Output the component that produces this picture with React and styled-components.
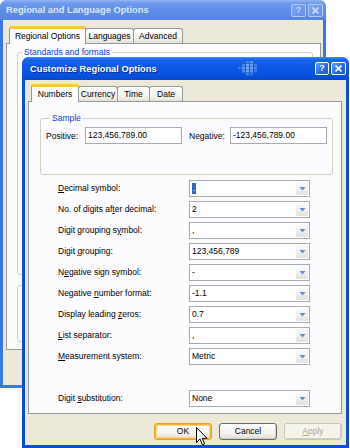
import React from 'react'
import styled, { createGlobalStyle } from 'styled-components'

const GlobalStyle = createGlobalStyle`
  html, body { margin: 0; padding: 0; background: #fff; }
  body {
    font-family: "Liberation Sans", Arial, sans-serif;
    font-size: 8.5px;
    color: #000;
  }
`

const Desktop = styled.div`
  position: relative;
  width: 350px;
  height: 448px;
  overflow: hidden;
  background: #fff;
`

const Window = styled.div`
  position: absolute;
  left: ${p => p.$left}px;
  top: ${p => p.$top}px;
  width: ${p => p.$width}px;
  height: ${p => p.$height}px;
  box-sizing: border-box;
  display: flex;
  flex-direction: column;
  border-radius: 7px 7px 0 0;
  overflow: hidden;
  background: ${p => p.$active ? '#0a4fdc' : '#3a76e4'};
`

const TitleBar = styled.div`
  position: relative;
  flex: none;
  height: ${p => p.$h}px;
  display: flex;
  align-items: center;
  padding: 0 3px 0 ${p => p.$pad}px;
  background: ${p => p.$active
    ? 'linear-gradient(#3d8cfb 0%, #1663ea 12%, #0b56e4 50%, #0650dc 85%, #0a48c4 100%)'
    : 'linear-gradient(#94b6f2 0%, #6f9bec 15%, #5d8ce8 55%, #5685e4 100%)'};
`

const Title = styled.div`
  flex: 1;
  font-weight: bold;
  font-size: 9.3px;
  color: ${p => p.$active ? '#fff' : '#dbe6fa'};
  text-shadow: ${p => p.$active ? '1px 1px 0 #0a2a9a' : 'none'};
  white-space: nowrap;
`

const CaptionButtons = styled.div`
  display: flex;
  gap: 2px;
`

const CaptionButton = styled.div`
  box-sizing: border-box;
  width: ${p => p.$w}px;
  height: 13px;
  display: flex;
  align-items: center;
  justify-content: center;
  border: 1px solid ${p => p.$active ? '#fff' : 'rgba(255,255,255,0.45)'};
  border-radius: 2px;
  background: ${p => p.$active
    ? 'linear-gradient(135deg, #5d9bff, #2566ea 60%, #1c55d8)'
    : 'linear-gradient(135deg, #7fa5ee, #6690e6)'};
  color: ${p => p.$active ? '#fff' : 'rgba(255,255,255,0.6)'};
  font-weight: bold;
  font-size: 9px;
  line-height: 1;
`

const PixelLogo = styled.svg`
  position: absolute;
  left: 215px;
  top: 4px;
`

const Body = styled.div`
  flex: 1;
  display: flex;
  flex-direction: column;
  margin: 0 3px 3px;
  padding: ${p => p.$pad};
  background: #ece9d8;
`

const TabRow = styled.div`
  flex: none;
  height: 17px;
  display: flex;
  align-items: flex-start;
  padding-left: 3px;
`

const Tab = styled.div`
  box-sizing: border-box;
  width: ${p => p.$w}px;
  height: ${p => p.$active ? 18 : 15}px;
  margin-top: ${p => p.$active ? 0 : 2}px;
  margin-left: ${p => p.$active ? 0 : -1}px;
  display: flex;
  align-items: center;
  justify-content: center;
  border: 1px solid #919b9c;
  border-bottom: none;
  border-radius: 3px 3px 0 0;
  background: ${p => p.$active ? '#fcfcfe' : 'linear-gradient(#ffffff, #f4f3ee 60%, #e4e2d9)'};
  position: relative;
  z-index: ${p => p.$active ? 2 : 0};
  ${p => p.$active && `
    border-top: 3px solid #ffc83c;
    box-shadow: inset 0 -1px 0 #fcfcfe;
    padding-bottom: 1px;
  `}
`

const Panel = styled.div`
  flex: 1;
  box-sizing: border-box;
  border: 1px solid #919b9c;
  background: #fcfcfe;
  display: flex;
  flex-direction: column;
`

const Group = styled.fieldset`
  flex: none;
  box-sizing: border-box;
  height: ${p => p.$h}px;
  margin: ${p => p.$margin};
  padding: ${p => p.$pad || '0'};
  border: 1px solid #d0d0bf;
  border-radius: 3px;
  min-width: 0;
`

const Legend = styled.legend`
  margin-left: 4px;
  padding: 0 2px;
  line-height: 10px;
  color: #0046d5;
`

const SampleRow = styled.div`
  display: grid;
  grid-template-columns: 39px 97px 48px 97px;
  align-items: center;
`

const SampleLabel = styled.div`
  padding-left: ${p => p.$indent || 0}px;
  white-space: nowrap;
`

const TextBox = styled.div`
  box-sizing: border-box;
  height: 17px;
  line-height: 15px;
  padding-left: 2px;
  border: 1px solid #a5acb2;
  background: #fff;
  white-space: nowrap;
`

const Rows = styled.div`
  display: grid;
  grid-template-columns: 131px 121px;
  grid-auto-rows: 17px;
  row-gap: 4px;
  margin: 5px 0 0 29px;
`

const RowLabel = styled.div`
  line-height: 17px;
  white-space: nowrap;
`

const Spacer = styled.div`
  grid-column: 1 / span 2;
`

const Combo = styled.div`
  box-sizing: border-box;
  display: flex;
  align-items: stretch;
  border: 1px solid #a5acb2;
  background: #fff;
`

const ComboValue = styled.div`
  flex: 1;
  line-height: 15px;
  padding-left: 2px;
  white-space: nowrap;
`

const Selected = styled.span`
  display: inline-block;
  height: 11px;
  line-height: 10px;
  padding: 0 1px;
  vertical-align: middle;
  background: #316ac5;
  color: #fff;
`

const ComboButton = styled.div`
  width: 12px;
  display: flex;
  align-items: center;
  justify-content: center;
  margin: 1px;
  border-radius: 1px;
  background: linear-gradient(#fbfbfb, #eeeeea 60%, #e2e2dc);
`

const U = styled.span`
  text-decoration: underline;
`

const ButtonRow = styled.div`
  flex: none;
  display: flex;
  justify-content: flex-end;
  gap: 7px;
  margin-top: 9px;
`

const Button = styled.div`
  box-sizing: border-box;
  width: 58px;
  height: 17px;
  line-height: 15px;
  text-align: center;
  border: 1px solid ${p => p.$disabled ? '#c9c7ba' : '#6b6b6b'};
  border-radius: 3px;
  background: ${p => p.$disabled ? '#f5f4ea' : 'linear-gradient(#ffffff, #f5f4ef 60%, #dedbd0)'};
  color: ${p => p.$disabled ? '#aca899' : '#000'};
  box-shadow: ${p => p.$focused ? 'inset 0 0 0 1px #f8b330, inset 0 0 0 2px #ffd98a' : 'inset -1px -1px 0 #cfcdc2'};
  ${p => p.$focused && 'border-color: #e8a026;'}
`

const Cursor = styled.svg`
  position: absolute;
  left: 196px;
  top: 427px;
`

const Arrow = () => (
  <svg width="7" height="4" viewBox="0 0 7 4">
    <path d="M0.5 0h6L3.5 3.5z" fill="#6b8bdc" />
  </svg>
)

const CloseGlyph = ({ color }) => (
  <svg width="7" height="7" viewBox="0 0 7 7">
    <path d="M0.5 0.5l6 6M6.5 0.5l-6 6" stroke={color} strokeWidth="1.6" />
  </svg>
)

const rows = [
  [<><U>D</U>ecimal symbol:</>, <Selected>.</Selected>],
  [<>No. of digits af<U>t</U>er decimal:</>, '2'],
  [<>Digit grouping s<U>y</U>mbol:</>, ','],
  [<>Digit <U>g</U>rouping:</>, '123,456,789'],
  [<>N<U>e</U>gative sign symbol:</>, '-'],
  [<>Negative <U>n</U>umber format:</>, '-1.1'],
  [<>Display leading <U>z</U>eros:</>, '0.7'],
  [<><U>L</U>ist separator:</>, ','],
  [<><U>M</U>easurement system:</>, 'Metric'],
  null,
  [<>Digit <U>s</U>ubstitution:</>, 'None'],
]

const pixels = [
  [9, 0, 0.35], [13, 0, 0.5], [5, 3, 0.4], [9, 3, 0.7], [13, 3, 0.6], [17, 3, 0.3],
  [1, 6, 0.3], [5, 6, 0.6], [9, 6, 0.8], [13, 6, 0.7], [17, 6, 0.45],
  [5, 9, 0.5], [9, 9, 0.7], [13, 9, 0.6], [17, 9, 0.3], [9, 12, 0.4], [13, 12, 0.3],
]

export default function App() {
  return (
    <>
      <GlobalStyle />
      <Desktop>
        <Window $left={0} $top={0} $width={326} $height={388}>
          <TitleBar $h={20} $pad={6}>
            <Title>Regional and Language Options</Title>
            <CaptionButtons>
              <CaptionButton $w={15}>?</CaptionButton>
              <CaptionButton $w={15}><CloseGlyph color="rgba(255,255,255,0.65)" /></CaptionButton>
            </CaptionButtons>
          </TitleBar>
          <Body $pad="6px 2px 0 3px">
            <TabRow>
              <Tab $w={77} $active>Regional Options</Tab>
              <Tab $w={49}>Languages</Tab>
              <Tab $w={50}>Advanced</Tab>
            </TabRow>
            <Panel>
              <Group $h={228} $margin="3px 7px 0 10px">
                <Legend>Standards and formats</Legend>
              </Group>
              <Group $h={62} $margin="5px 7px 0 10px">
                <Legend>Location</Legend>
              </Group>
            </Panel>
            <ButtonRow style={{ marginTop: 8, marginBottom: 10 }}>
              <Button>OK</Button>
              <Button>Cancel</Button>
              <Button $disabled><U>A</U>pply</Button>
            </ButtonRow>
          </Body>
        </Window>

        <Window $left={22} $top={57} $width={327} $height={391} $active>
          <TitleBar $h={23} $pad={8} $active>
            <Title $active>Customize Regional Options</Title>
            <PixelLogo width="20" height="15" viewBox="0 0 20 15">
              {pixels.map(([x, y, o], i) => (
                <rect key={i} x={x} y={y} width="3" height="2.5" fill="#9cc4ff" opacity={o} />
              ))}
            </PixelLogo>
            <CaptionButtons>
              <CaptionButton $w={14} $active>?</CaptionButton>
              <CaptionButton $w={15} $active><CloseGlyph color="#fff" /></CaptionButton>
            </CaptionButtons>
          </TitleBar>
          <Body $pad="4px 4px 5px 3px">
            <TabRow>
              <Tab $w={48} $active>Numbers</Tab>
              <Tab $w={40}>Currency</Tab>
              <Tab $w={33}>Time</Tab>
              <Tab $w={34}>Date</Tab>
            </TabRow>
            <Panel>
              <Group $h={62} $margin="11px 8px 0 11px" $pad="4px 5px 0">
                <Legend>Sample</Legend>
                <SampleRow>
                  <SampleLabel>Positive:</SampleLabel>
                  <TextBox>123,456,789.00</TextBox>
                  <SampleLabel $indent={7}>Negative:</SampleLabel>
                  <TextBox>-123,456,789.00</TextBox>
                </SampleRow>
              </Group>
              <Rows>
                {rows.map((r, i) => r ? (
                  <React.Fragment key={i}>
                    <RowLabel>{r[0]}</RowLabel>
                    <Combo>
                      <ComboValue>{r[1]}</ComboValue>
                      <ComboButton><Arrow /></ComboButton>
                    </Combo>
                  </React.Fragment>
                ) : <Spacer key={i} />)}
              </Rows>
            </Panel>
            <ButtonRow>
              <Button $focused>OK</Button>
              <Button>Cancel</Button>
              <Button $disabled><U>A</U>pply</Button>
            </ButtonRow>
          </Body>
        </Window>

        <Cursor width="12" height="19" viewBox="0 0 12 19">
          <path d="M0.5 0.5V15.5L4 12L6.5 17.8L8.6 16.9L6.2 11.3H11Z" fill="#fff" stroke="#000" strokeWidth="1" strokeLinejoin="round" />
        </Cursor>
      </Desktop>
    </>
  )
}
